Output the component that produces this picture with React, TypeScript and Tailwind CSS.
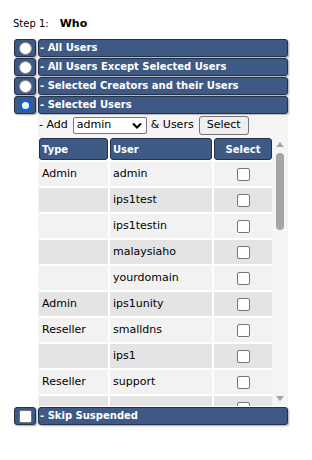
import React from "react";

const rows = [
    { type: 'Admin', user: 'admin' },
    { type: '', user: 'ips1test' },
    { type: '', user: 'ips1testin' },
    { type: '', user: 'malaysiaho' },
    { type: '', user: 'yourdomain' },
    { type: 'Admin', user: 'ips1unity' },
    { type: 'Reseller', user: 'smalldns' },
    { type: '', user: 'ips1' },
    { type: 'Reseller', user: 'support' },
    { type: '', user: '' },
];

const options = [
    { label: '- All Users', checked: false },
    { label: '- All Users Except Selected Users', checked: false },
    { label: '- Selected Creators and their Users', checked: false },
    { label: '- Selected Users', checked: true },
];

function Box({ children }: { children: React.ReactNode }) {
    return (
        <div className="w-[22px] h-[18px] shrink-0 flex items-center justify-center rounded-[3px] bg-[#3f5985] border border-[#22324d] shadow-[1px_1px_2px_rgba(0,0,0,0.35)]">
            {children}
        </div>
    );
}

function Bar({ label }: { label: string }) {
    return (
        <div className="flex-1 h-[18px] flex items-center pl-[1px] rounded-[3px] bg-[#3f5985] border border-[#22324d] shadow-[1px_1px_2px_rgba(0,0,0,0.35)] text-white text-[10px] font-bold leading-none whitespace-nowrap">
            {label}
        </div>
    );
}

function Checkbox() {
    return <div className="w-[13px] h-[13px] rounded-[2px] bg-white border border-[#767676]" />;
}

export default function App() {
    return (
        <div className="w-[312px] h-[460px] bg-white text-black font-['DejaVu_Sans',sans-serif] text-[11px] pt-[18px]">
            <div className="pl-[13px] h-[12px] flex items-baseline text-[10px] leading-[12px]">
                <span>Step 1:</span>
                <b className="ml-[11px] text-[11px]">Who</b>
            </div>

            <div className="mt-[9px] ml-[14px] w-[274px] flex flex-col gap-[1px]">
                {options.map((o) => (
                    <div key={o.label} className="flex gap-[2px]">
                        <Box>
                            {o.checked ? (
                                <div className="w-[13px] h-[13px] rounded-full bg-white border-[3px] border-[#0b64d0]" />
                            ) : (
                                <div className="w-[13px] h-[13px] rounded-full bg-white border border-[#8f8f8f]" />
                            )}
                        </Box>
                        <Bar label={o.label} />
                    </div>
                ))}

                <div className="ml-[24px] w-[250px] bg-[#f4f4f4]">
                    <div className="h-[21px] flex items-center pl-[1px]">
                        <span>- Add</span>
                        <div className="ml-[5px] w-[74px] h-[17px] flex items-center justify-between pl-[3px] pr-[4px] bg-white border border-[#767676] rounded-[2px]">
                            <span>admin</span>
                            <svg width="10" height="7" viewBox="0 0 10 7">
                                <path d="M1 1.5 L5 5.5 L9 1.5" fill="none" stroke="#000" strokeWidth="2" />
                            </svg>
                        </div>
                        <span className="ml-[4px]">&amp; Users</span>
                        <div className="ml-[5px] w-[50px] h-[19px] flex items-center justify-center bg-[#efefef] border border-[#767676] rounded-[3px]">
                            Select
                        </div>
                    </div>

                    <div className="mt-[2px] h-[268px] flex pl-[1px] overflow-hidden">
                        <div className="w-[233px] h-[268px] overflow-hidden">
                            <div className="grid grid-cols-[69px_102px_58px] gap-[2px] bg-white">
                                <div className="h-[22px] flex items-center pl-[2px] rounded-[3px] bg-[#3f5985] border border-[#22324d] text-white text-[10px] font-bold">Type</div>
                                <div className="h-[22px] flex items-center pl-[2px] rounded-[3px] bg-[#3f5985] border border-[#22324d] text-white text-[10px] font-bold">User</div>
                                <div className="h-[22px] flex items-center justify-center rounded-[3px] bg-[#3f5985] border border-[#22324d] text-white text-[10px] font-bold">Select</div>
                                {rows.map((r, i) => {
                                    const bg = i % 2 === 0 ? 'bg-[#f2f2f2]' : 'bg-[#e4e4e4]';
                                    return (
                                        <React.Fragment key={i}>
                                            <div className={`h-[24px] flex items-center pl-[3px] ${bg}`}>{r.type}</div>
                                            <div className={`h-[24px] flex items-center pl-[3px] ${bg}`}>{r.user}</div>
                                            <div className={`h-[24px] flex items-center justify-center ${bg}`}>
                                                <Checkbox />
                                            </div>
                                        </React.Fragment>
                                    );
                                })}
                            </div>
                        </div>
                        <div className="ml-[1px] w-[14px] h-[268px] flex flex-col items-center">
                            <svg className="mt-[4px]" width="8" height="5" viewBox="0 0 8 5">
                                <path d="M0 5 L4 0 L8 5 Z" fill="#a3a3a3" />
                            </svg>
                            <div className="mt-[6px] w-[8px] h-[77px] rounded-full bg-[#a6a6a6]" />
                            <svg className="mt-auto mb-[5px]" width="8" height="5" viewBox="0 0 8 5">
                                <path d="M0 0 L8 0 L4 5 Z" fill="#a3a3a3" />
                            </svg>
                        </div>
                    </div>
                </div>

                <div className="flex gap-[2px]">
                    <Box>
                        <Checkbox />
                    </Box>
                    <Bar label="- Skip Suspended" />
                </div>
            </div>
        </div>
    );
}
